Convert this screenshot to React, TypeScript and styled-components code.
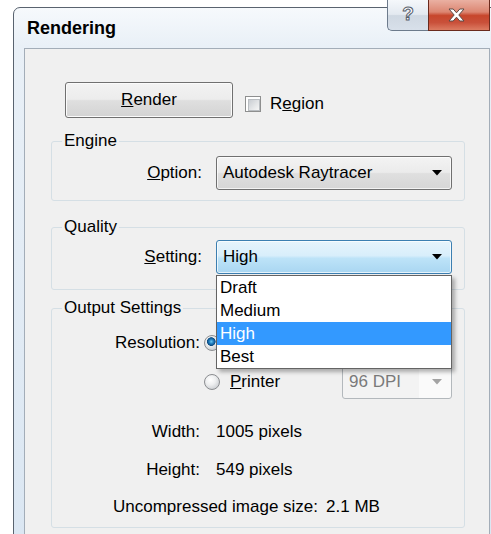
import React from 'react';
import styled, { createGlobalStyle } from 'styled-components';

const GlobalStyle = createGlobalStyle`
  html, body {
    margin: 0;
    padding: 0;
    background: #ffffff;
  }
  body {
    font-family: "Liberation Sans", Arial, sans-serif;
    overflow: hidden;
  }
  * {
    box-sizing: border-box;
  }
`;

const Page = styled.div`
  width: 491px;
  height: 534px;
  overflow: hidden;
  padding: 7px 0 0 13px;
`;

const Window = styled.div`
  width: 492px;
  height: 560px;
  border: 1px solid #59636f;
  border-radius: 7px 7px 0 0;
  background: linear-gradient(to bottom, #f6f9fc 0px, #e9f0f7 38px, #dae6f2 100%);
  display: flex;
  flex-direction: column;
`;

const TitleBar = styled.div`
  height: 40px;
  display: flex;
  align-items: center;
  padding-left: 13px;
  flex-shrink: 0;
`;

const Title = styled.div`
  font-size: 18px;
  font-weight: bold;
  color: #000;
  line-height: 22px;
`;

const CaptionButtons = styled.div`
  display: flex;
  margin-left: auto;
  margin-right: 14px;
  align-self: flex-start;
  margin-top: -8px;
`;

const HelpButton = styled.div`
  width: 41px;
  height: 31px;
  border: 1px solid #6d7b8c;
  border-top: none;
  border-right: none;
  border-radius: 0 0 0 5px;
  background: linear-gradient(to bottom, #f5f8fb 0%, #e3e9f0 48%, #cfd8e2 52%, #d8e0ea 100%);
  display: flex;
  align-items: center;
  justify-content: center;
  font-size: 19px;
  font-weight: bold;
  color: #ffffff;
  -webkit-text-stroke: 1px #56606c;
  padding-bottom: 2px;
`;

const CloseButton = styled.div`
  width: 62px;
  height: 31px;
  border: 1px solid #6a2a1d;
  border-top: none;
  background: linear-gradient(to bottom, #eab0a2 0%, #dc8672 40%, #c7462c 52%, #c9503a 75%, #dc7c62 100%);
  display: flex;
  align-items: center;
  justify-content: center;
  padding-right: 6px;
`;

const Content = styled.div`
  flex: 1;
  margin-left: 10px;
  width: 466px;
  background: #f0f0f0;
  border: 1px solid #a3adb8;
  border-bottom: none;
  padding: 33px 24px 0 26px;
  font-size: 17px;
  color: #000;
`;

const RenderRow = styled.div`
  display: flex;
  align-items: center;
  margin-left: 14px;
`;

const PushButton = styled.div`
  width: 168px;
  height: 36px;
  border: 1px solid #707070;
  border-radius: 3px;
  background: linear-gradient(to bottom, #f3f3f3 0%, #ececec 48%, #dfdfdf 52%, #d3d3d3 100%);
  box-shadow: inset 0 0 0 1px #fbfbfb;
  display: flex;
  align-items: center;
  justify-content: center;
`;

const CheckLabel = styled.label`
  display: flex;
  align-items: center;
  gap: 9px;
  margin-left: 12px;
  margin-top: 8px;
`;

const CheckBox = styled.span`
  width: 16px;
  height: 16px;
  border: 1px solid #8e8f8f;
  background: #ffffff;
  padding: 2px;
  display: block;

  &::after {
    content: '';
    display: block;
    width: 100%;
    height: 100%;
    border: 1px solid #b9bdc1;
    background: linear-gradient(135deg, #c9cdd2 0%, #e3e5e7 55%, #f6f6f6 100%);
  }
`;

const Group = styled.fieldset<{ $mt: number; $pt: number; $pb: number }>`
  margin: ${({ $mt }) => $mt}px 0 0;
  padding: ${({ $pt }) => $pt}px 0 ${({ $pb }) => $pb}px;
  border: 1px solid #d5dfe5;
  border-radius: 3px;
  min-width: 0;
`;

const Legend = styled.legend`
  margin-left: 10px;
  padding: 0 2px;
  line-height: 20px;
  font-size: 17px;
`;

const FieldRow = styled.div`
  display: flex;
  align-items: center;
  height: 34px;
`;

const FieldLabel = styled.div<{ $w: number; $gap: number }>`
  width: ${({ $w }) => $w}px;
  margin-right: ${({ $gap }) => $gap}px;
  text-align: right;
  flex-shrink: 0;
`;

const Combo = styled.div<{ $w: number; $variant?: 'normal' | 'focused' | 'disabled' }>`
  position: relative;
  width: ${({ $w }) => $w}px;
  height: 34px;
  border-radius: 3px;
  border: 1px solid
    ${({ $variant }) => ($variant === 'focused' ? '#3c7fb1' : $variant === 'disabled' ? '#b3b8bc' : '#707070')};
  background: ${({ $variant }) =>
    $variant === 'focused'
      ? 'linear-gradient(to bottom, #e6f4fc 0%, #d8eefb 46%, #bde3f8 54%, #a9d6f1 100%)'
      : $variant === 'disabled'
      ? 'linear-gradient(to right, #f3f3f3 calc(100% - 32px), #fafafa calc(100% - 32px))'
      : 'linear-gradient(to bottom, #f3f3f3 0%, #ebebeb 48%, #dfdfdf 52%, #d6d6d6 100%)'};
  box-shadow: ${({ $variant }) => ($variant === 'disabled' ? 'none' : 'inset 0 0 0 1px rgba(255,255,255,0.7)')};
  color: ${({ $variant }) => ($variant === 'disabled' ? '#7a7a7a' : '#000')};
  display: flex;
  align-items: center;
  justify-content: space-between;
  padding: 0 9px 0 6px;
`;

const Arrow = ({ color }: { color: string }) => (
  <svg width="10" height="6" viewBox="0 0 10 6">
    <polygon points="0,0 10,0 5,5.5" fill={color} />
  </svg>
);

const DropList = styled.div`
  position: absolute;
  top: calc(100% + 2px);
  left: -1px;
  right: -1px;
  z-index: 10;
  background: #ffffff;
  border: 1px solid #646464;
  box-shadow: 3px 3px 4px rgba(0, 0, 0, 0.3);
`;

const ListItem = styled.div<{ $active?: boolean }>`
  height: 23px;
  line-height: 23px;
  padding-left: 3px;
  background: ${({ $active }) => ($active ? '#3399ff' : 'transparent')};
  color: ${({ $active }) => ($active ? '#ffffff' : '#000')};
`;

const OptRow = styled.div<{ $mt?: number }>`
  display: flex;
  align-items: center;
  height: 34px;
  margin-top: ${({ $mt }) => $mt ?? 0}px;
`;

const RadioOption = styled.label`
  width: 138px;
  display: flex;
  align-items: center;
  gap: 10px;
  flex-shrink: 0;
`;

const Radio = styled.span<{ $checked?: boolean }>`
  width: 16px;
  height: 16px;
  border-radius: 50%;
  border: 1px solid #8b8d90;
  display: block;
  background: ${({ $checked }) =>
    $checked
      ? 'radial-gradient(circle at 45% 40%, #6ec9f0 0, #2683c4 2px, #0b4a80 4px, transparent 4.6px), radial-gradient(circle at 40% 35%, #ffffff 0, #e9eaeb 45%, #c3c6ca 85%)'
      : 'radial-gradient(circle at 40% 35%, #ffffff 0, #eeeff0 40%, #c8cbcf 85%)'};
`;

const InfoRow = styled.div<{ $mt: number }>`
  display: flex;
  height: 20px;
  line-height: 20px;
  margin-top: ${({ $mt }) => $mt}px;
`;

const SizeRow = styled.div`
  display: flex;
  gap: 8px;
  height: 20px;
  line-height: 20px;
  margin-top: 17px;
  padding-left: 61px;
`;

const qualityLevels = ['Draft', 'Medium', 'High', 'Best'];

export default function App() {
  return (
    <Page>
      <GlobalStyle />
      <Window>
        <TitleBar>
          <Title>Rendering</Title>
          <CaptionButtons>
            <HelpButton>?</HelpButton>
            <CloseButton>
              <svg width="17" height="14" viewBox="-1 -1 17 14">
                <path
                  d="M0,0 H4.2 L7.5,3.8 L10.8,0 H15 L9.8,6 L15,12 H10.8 L7.5,8.2 L4.2,12 H0 L5.2,6 Z"
                  fill="#ffffff"
                  stroke="#5b4a46"
                  strokeWidth="1"
                  strokeLinejoin="round"
                />
              </svg>
            </CloseButton>
          </CaptionButtons>
        </TitleBar>

        <Content>
          <RenderRow>
            <PushButton>
              <span>
                <u>R</u>ender
              </span>
            </PushButton>
            <CheckLabel>
              <CheckBox />
              <span>
                R<u>e</u>gion
              </span>
            </CheckLabel>
          </RenderRow>

          <Group $mt={13} $pt={5} $pb={10}>
            <Legend>Engine</Legend>
            <FieldRow>
              <FieldLabel $w={150} $gap={14}>
                <u>O</u>ption:
              </FieldLabel>
              <Combo $w={236}>
                <span>Autodesk Raytracer</span>
                <Arrow color="#000" />
              </Combo>
            </FieldRow>
          </Group>

          <Group $mt={16} $pt={3} $pb={15}>
            <Legend>Quality</Legend>
            <FieldRow>
              <FieldLabel $w={150} $gap={14}>
                <u>S</u>etting:
              </FieldLabel>
              <Combo $w={236} $variant="focused">
                <span>High</span>
                <Arrow color="#000" />
                <DropList>
                  {qualityLevels.map((q) => (
                    <ListItem key={q} $active={q === 'High'}>
                      {q}
                    </ListItem>
                  ))}
                </DropList>
              </Combo>
            </FieldRow>
          </Group>

          <Group $mt={8} $pt={8} $pb={10}>
            <Legend>Output Settings</Legend>
            <OptRow>
              <FieldLabel $w={148} $gap={4}>
                Resolution:
              </FieldLabel>
              <RadioOption>
                <Radio $checked />
              </RadioOption>
            </OptRow>
            <OptRow $mt={5}>
              <FieldLabel $w={148} $gap={4} />
              <RadioOption>
                <Radio />
                <span>
                  <u>P</u>rinter
                </span>
              </RadioOption>
              <Combo $w={110} $variant="disabled">
                <span>96 DPI</span>
                <Arrow color="#a3a3a3" />
              </Combo>
            </OptRow>
            <InfoRow $mt={23}>
              <FieldLabel $w={148} $gap={16}>
                Width:
              </FieldLabel>
              <span>1005 pixels</span>
            </InfoRow>
            <InfoRow $mt={18}>
              <FieldLabel $w={148} $gap={16}>
                Height:
              </FieldLabel>
              <span>549 pixels</span>
            </InfoRow>
            <SizeRow>
              <span>Uncompressed image size:</span>
              <span>2.1 MB</span>
            </SizeRow>
          </Group>
        </Content>
      </Window>
    </Page>
  );
}
